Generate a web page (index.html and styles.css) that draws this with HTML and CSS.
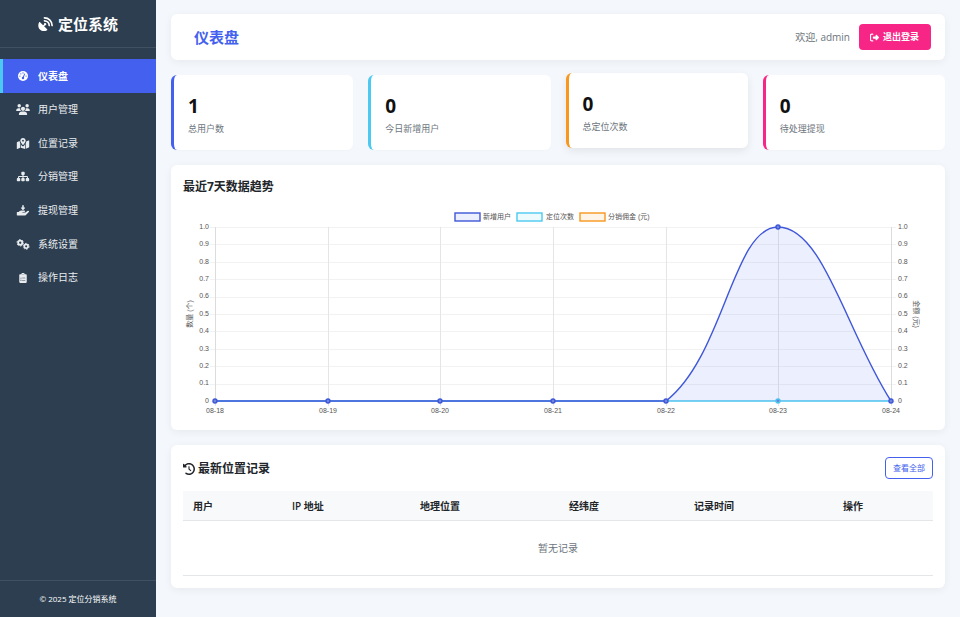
FILE: index.html
```html
<!DOCTYPE html>
<html lang="zh-CN">
<head>
<meta charset="utf-8">
<meta name="viewport" content="width=device-width, initial-scale=1">
<title>仪表盘 - 定位系统</title>
<link rel="stylesheet" href="styles.css">
</head>
<body>
<div class="layout">
  <aside class="sidebar">
    <div class="brand">
      <svg class="brand-icon" viewBox="0 0 512 512" aria-hidden="true"><path fill="currentColor" d="M40 180c8-10 22-10 30-2l104 104 30-30c-5-28 14-46 36-46 26 0 44 20 44 44 0 22-20 40-46 36l-30 30 104 104c10 10 8 24-2 30C228 500 130 490 66 426 4 362-10 262 40 180z"/><path fill="none" stroke="currentColor" stroke-width="56" stroke-linecap="round" d="M220 30c144 0 262 118 262 262M220 130c89 0 162 73 162 162"/></svg>
      <span>定位系统</span>
    </div>
    <nav class="menu" aria-label="主菜单">
      <a class="menu-link active" href="#dashboard">
        <svg class="icon" viewBox="0 0 512 512" aria-hidden="true"><circle cx="256" cy="256" r="256" fill="currentColor"/><g class="cut"><circle cx="256" cy="98" r="34"/><circle cx="144" cy="144" r="32"/><circle cx="98" cy="256" r="32"/><circle cx="414" cy="256" r="32"/><circle cx="256" cy="356" r="62"/><path d="M232 340l92-214 44 20-84 212z"/></g></svg>
        仪表盘</a>
      <a class="menu-link" href="#users">
        <svg class="icon wide" viewBox="0 0 640 512" aria-hidden="true"><g fill="currentColor"><circle cx="144" cy="80" r="80"/><circle cx="512" cy="80" r="80"/><circle cx="320" cy="224" r="96"/><path d="M0 299c0-59 48-107 107-107h43c16 0 31 4 45 10-12 48 4 90 38 118H21c-12 0-21-9-21-21zM407 320c34-28 50-70 38-118 14-6 29-10 45-10h43c59 0 107 48 107 107 0 12-9 21-21 21zM128 485c0-73 60-133 133-133h118c73 0 133 60 133 133 0 15-12 27-27 27H155c-15 0-27-12-27-27z"/></g></svg>
        用户管理</a>
      <a class="menu-link" href="#locations">
        <svg class="icon wide" viewBox="0 0 576 512" aria-hidden="true"><path fill="currentColor" fill-rule="evenodd" d="M288 0c-70 0-126 56-126 126 0 56 82 158 112 194 8 10 20 10 28 0 30-36 112-138 112-194C414 56 358 0 288 0zm0 84a42 42 0 1 1 0 84 42 42 0 0 1 0-84z"/><path fill="currentColor" d="M0 218c0-14 8-26 20-30l110-44c6 40 18 74 30 100v214L22 510c-10 4-22-4-22-14zM192 298c22 34 44 58 56 72 20 24 58 24 78 0 14-16 36-42 58-74v216l-192-54zM416 246c18-36 28-66 32-90l106-42c10-4 22 4 22 16v280c0 14-8 26-20 30l-140 56z"/></svg>
        位置记录</a>
      <a class="menu-link" href="#distribution">
        <svg class="icon wide" viewBox="0 0 576 512" aria-hidden="true"><path fill="currentColor" d="M208 80c0-26 22-48 48-48h64c26 0 48 22 48 48v64c0 26-22 48-48 48h-8v40h152c30 0 56 26 56 56v32h8c26 0 48 22 48 48v64c0 26-22 48-48 48h-64c-26 0-48-22-48-48v-64c0-26 22-48 48-48h8v-32c0-5-3-8-8-8H312v40h8c26 0 48 22 48 48v64c0 26-22 48-48 48h-64c-26 0-48-22-48-48v-64c0-26 22-48 48-48h8v-40H112c-5 0-8 3-8 8v32h8c26 0 48 22 48 48v64c0 26-22 48-48 48H48c-26 0-48-22-48-48v-64c0-26 22-48 48-48h8v-32c0-30 26-56 56-56h152v-40h-8c-26 0-48-22-48-48z"/></svg>
        分销管理</a>
      <a class="menu-link" href="#withdrawals">
        <svg class="icon wide" viewBox="0 0 576 512" aria-hidden="true"><path fill="currentColor" d="M252 24c0-32 72-32 72 0v90h38c22 0 30 22 14 38l-72 76c-10 10-22 10-32 0l-72-76c-16-16-8-38 14-38h38zM0 342c0-13 9-22 22-22h62l48-38c22-18 48-26 76-26h142c46 0 46 64 0 64h-78c-22 0-22 32 0 32h110c14 0 26-4 36-12l92-68c42-28 86 22 48 56L426 464c-20 18-42 26-66 26H22c-13 0-22-9-22-22z"/></svg>
        提现管理</a>
      <a class="menu-link" href="#settings">
        <svg class="icon wide" viewBox="0 0 640 512" aria-hidden="true"><g fill="none" stroke="currentColor"><circle cx="190" cy="176" r="96" stroke-width="84"/><circle cx="190" cy="176" r="150" stroke-width="44" stroke-dasharray="79 78"/><circle cx="468" cy="342" r="88" stroke-width="78"/><circle cx="468" cy="342" r="138" stroke-width="42" stroke-dasharray="72 72.500"/></g></svg>
        系统设置</a>
      <a class="menu-link" href="#logs">
        <svg class="icon" viewBox="0 0 512 512" aria-hidden="true"><path fill="currentColor" fill-rule="evenodd" d="M112 64h64a80 80 0 0 1 160 0h64c27 0 48 21 48 48v352c0 27-21 48-48 48H112c-27 0-48-21-48-48V112c0-27 21-48 48-48zm144-24a24 24 0 1 0 0 48 24 24 0 0 0 0-48zM128 238v42h48v-42zm84 0v32h160v-32zm-84 112v42h48v-42zm84 4v32h160v-32z"/></svg>
        操作日志</a>
    </nav>
    <footer class="sidebar-footer">© 2025 定位分销系统</footer>
  </aside>

  <main class="main">
    <header class="topbar">
      <h1>仪表盘</h1>
      <div class="account">
        <span>欢迎, admin</span>
        <button class="logout" type="button">
          <svg class="logout-icon" viewBox="0 0 512 512" aria-hidden="true"><path fill="currentColor" d="M377.900 105.900L500.700 228.700c7.200 7.200 11.300 17.100 11.300 27.300s-4.100 20.100-11.300 27.300L377.900 406.100c-6.400 6.400-15 9.900-24 9.900-18.700 0-33.900-15.200-33.900-33.900V320H192c-17.700 0-32-14.300-32-32v-64c0-17.700 14.300-32 32-32h128v-62.100c0-18.700 15.200-33.900 33.900-33.900 9 0 17.600 3.600 24 9.900zM160 96H96c-17.700 0-32 14.300-32 32v256c0 17.700 14.300 32 32 32h64c17.700 0 32 14.300 32 32s-14.300 32-32 32H96c-53 0-96-43-96-96V128C0 75 43 32 96 32h64c17.700 0 32 14.300 32 32s-14.300 32-32 32z"/></svg>
          退出登录
        </button>
      </div>
    </header>

    <section class="stats" aria-label="统计">
      <div class="stat blue"><strong>1</strong><span>总用户数</span></div>
      <div class="stat cyan"><strong>0</strong><span>今日新增用户</span></div>
      <div class="stat orange raised"><strong>0</strong><span>总定位次数</span></div>
      <div class="stat pink"><strong>0</strong><span>待处理提现</span></div>
    </section>

    <section class="card">
      <h2 class="chart-title">最近7天数据趋势</h2>
      <svg class="chart" viewBox="0 0 750 212" role="img" aria-label="最近7天数据趋势">
        <g class="legend-box">
          <rect class="s-blue" x="272" y="7" width="25" height="8"/>
          <rect class="s-cyan" x="334" y="7" width="25" height="8"/>
          <rect class="s-orange" x="397" y="7" width="25" height="8"/>
        </g>
        <g>
          <text x="300" y="13">新增用户</text>
          <text x="363" y="13">定位次数</text>
          <text x="425" y="13">分销佣金 (元)</text>
        </g>
        <path class="grid-h" d="M27 21H713M27 38H713M27 56H713M27 73H713M27 91H713M27 108H713M27 125H713M27 143H713M27 160H713M27 178H713M27 195H713"/>
        <path class="grid-v" d="M32 21V200M145 21V200M257 21V200M370 21V200M483 21V200M595 21V200M708 21V200"/>
        <path class="axis" d="M32 21V195M708 21V195"/>
        <g text-anchor="end">
          <text x="26" y="23">1.0</text><text x="26" y="40">0.9</text><text x="26" y="58">0.8</text><text x="26" y="75">0.7</text><text x="26" y="92">0.6</text><text x="26" y="110">0.5</text><text x="26" y="127">0.4</text><text x="26" y="145">0.3</text><text x="26" y="162">0.2</text><text x="26" y="179">0.1</text><text x="26" y="197">0</text>
        </g>
        <g>
          <text x="715" y="23">1.0</text><text x="715" y="40">0.9</text><text x="715" y="58">0.8</text><text x="715" y="75">0.7</text><text x="715" y="92">0.6</text><text x="715" y="110">0.5</text><text x="715" y="127">0.4</text><text x="715" y="145">0.3</text><text x="715" y="162">0.2</text><text x="715" y="179">0.1</text><text x="715" y="197">0</text>
        </g>
        <g text-anchor="middle">
          <text x="32" y="207">08-18</text><text x="145" y="207">08-19</text><text x="257" y="207">08-20</text><text x="370" y="207">08-21</text><text x="483" y="207">08-22</text><text x="595" y="207">08-23</text><text x="708" y="207">08-24</text>
          <text transform="translate(9 108) rotate(-90)">数量 (个)</text>
          <text transform="translate(731 108) rotate(90)">金额 (元)</text>
        </g>
        <path class="line s-cyan" d="M32 195H708"/>
        <circle class="point s-cyan" cx="595" cy="195" r="2"/>
        <path class="area" d="M483 195C541 150 550 21 595 21C640 21 663 125 708 195Z"/>
        <path class="line s-blue" d="M32 195H483C541 150 550 21 595 21C640 21 663 125 708 195"/>
        <g class="point s-blue">
          <circle cx="32" cy="195" r="2"/><circle cx="145" cy="195" r="2"/><circle cx="257" cy="195" r="2"/><circle cx="370" cy="195" r="2"/><circle cx="483" cy="195" r="2"/><circle cx="595" cy="21" r="2"/><circle cx="708" cy="195" r="2"/>
        </g>
      </svg>
    </section>

    <section class="card">
      <div class="card-head">
        <h2><svg class="history-icon" viewBox="0 0 512 512" aria-hidden="true"><path fill="currentColor" d="M75 75L41 41C25.900 25.900 0 36.600 0 57.900V168c0 13.300 10.700 24 24 24h110.100c21.400 0 32.100-25.900 17-41l-30.800-30.800C155 85.500 203 64 256 64c106 0 192 86 192 192s-86 192-192 192c-40.800 0-78.600-12.700-109.700-34.400-14.500-10.100-34.400-6.600-44.600 7.900s-6.600 34.400 7.900 44.600C151.200 495 201.700 512 256 512c141.400 0 256-114.600 256-256S397.400 0 256 0C185.300 0 121.300 28.700 75 75zm181 53c-13.300 0-24 10.700-24 24v104c0 6.400 2.500 12.500 7 17l72 72c9.400 9.400 24.600 9.400 33.900 0s9.400-24.600 0-33.900l-65-65V152c0-13.300-10.700-24-24-24z"/></svg>最新位置记录</h2>
        <a class="view-all" href="#locations">查看全部</a>
      </div>
      <table class="records">
        <colgroup><col class="c-user"><col class="c-ip"><col class="c-place"><col class="c-coord"><col class="c-time"><col class="c-action"></colgroup>
        <thead>
          <tr><th scope="col">用户</th><th scope="col">IP 地址</th><th scope="col">地理位置</th><th scope="col">经纬度</th><th scope="col">记录时间</th><th scope="col">操作</th></tr>
        </thead>
        <tbody>
          <tr><td class="empty" colspan="6">暂无记录</td></tr>
        </tbody>
      </table>
    </section>
  </main>
</div>
</body>
</html>
```
FILE: styles.css
```css
:root {
  --blue: #4361ee;
  --cyan: #4cc9f0;
  --orange: #f8961e;
  --pink: #f72585;
  --ink: #212529;
  --muted: #6c757d;
}

* { box-sizing: border-box; }

body {
  margin: 0;
  background: #f4f7fb;
  color: var(--ink);
  font-family: "Open Sans", "Noto Sans CJK SC", sans-serif;
  font-size: 10px;
  line-height: 15px;
}

h1, h2 { margin: 0; }
a { text-decoration: none; }

.layout { display: flex; min-height: 100vh; }

.sidebar {
  display: flex;
  flex-direction: column;
  flex: 0 0 156px;
  background: #2c3e50;
  color: #fff;
}

.brand {
  display: flex;
  align-items: center;
  justify-content: center;
  gap: 5px;
  padding: 13px 12px 11px;
  border-bottom: 1px solid #415161;
  font-size: 15px;
  font-weight: 700;
  line-height: 23px;
}

.brand-icon { width: 15px; height: 15px; }

.menu {
  display: grid;
  grid-template-rows: repeat(7, 1fr);
  height: 235px;
  margin-top: 11px;
}

.menu-link {
  display: flex;
  align-items: center;
  gap: 8px;
  padding: 1px 0 0 13px;
  border-left: 3px solid transparent;
  color: #e9ecef;
}

.menu-link.active {
  background: var(--blue);
  border-left-color: var(--cyan);
  color: #fff;
  font-weight: 700;
}

.icon { width: 14px; height: 10px; }
.icon.wide { height: 11px; }
.cut { fill: var(--blue); }

.sidebar-footer {
  margin-top: auto;
  padding: 10px 11px 11px;
  border-top: 1px solid #415161;
  font-size: 8px;
  text-align: center;
}

.main {
  display: flex;
  flex: 1;
  flex-direction: column;
  gap: 15px;
  min-width: 0;
  padding: 14px 15px;
}

.topbar, .card, .stat {
  background: #fff;
  border-radius: 6px;
}

.topbar, .card { box-shadow: 0 2px 8px rgba(0, 0, 0, 0.06); }

.topbar {
  display: flex;
  align-items: center;
  justify-content: space-between;
  padding: 10px 14px 10px 23px;
}

.topbar h1 {
  color: var(--blue);
  font-size: 15px;
  line-height: 23px;
}

.account {
  display: flex;
  align-items: center;
  gap: 9px;
  color: var(--muted);
}

.logout {
  display: flex;
  align-items: center;
  gap: 4px;
  padding: 6px 12px 6px 11px;
  border: 0;
  border-radius: 4px;
  background: var(--pink);
  color: #fff;
  font: 700 9px/14px "Open Sans", "Noto Sans CJK SC", sans-serif;
}

.logout-icon { width: 9px; height: 9px; }

.stats {
  display: grid;
  grid-template-columns: repeat(4, 1fr);
  gap: 15px;
}

.stat {
  display: flex;
  flex-direction: column;
  padding: 17px 14px 13px;
  border-left: 3px solid;
  box-shadow: 0 1px 3px rgba(0, 0, 0, 0.02);
}

.stat strong { margin-bottom: 1px; color: #111; font-size: 19px; line-height: 28px; }
.stat span { color: var(--muted); font-size: 9px; line-height: 16px; }
.stat.blue { border-color: var(--blue); }
.stat.cyan { border-color: var(--cyan); }
.stat.orange { border-color: var(--orange); }
.stat.pink { border-color: var(--pink); }
.stat.raised { transform: translateY(-2px); box-shadow: 0 3px 8px rgba(0, 0, 0, 0.08); }

.card { padding: 12px; }
.card h2 { font-size: 12px; font-weight: 700; line-height: 20px; }
.card .chart-title { margin-bottom: 9px; }

.chart { display: block; width: 100%; height: auto; }
.chart text { fill: #555; font: 7px "Liberation Sans", "Noto Sans CJK SC", sans-serif; }
.legend-box { stroke-width: 1.4; }
.s-blue { stroke: #3f57d8; fill: #eceffd; }
.s-cyan { stroke: var(--cyan); fill: #edfafe; }
.s-orange { stroke: var(--orange); fill: #fef4e8; }
.grid-h { stroke: #f2f2f2; shape-rendering: crispEdges; }
.grid-v { stroke: #e5e5e5; shape-rendering: crispEdges; }
.axis { stroke: #dcdcdc; shape-rendering: crispEdges; }
.line { fill: none; stroke-width: 1.4; }
.area { fill: var(--blue); fill-opacity: 0.1; }
.point { fill: #7186d8; stroke-width: 1.4; }

.card-head {
  display: flex;
  align-items: center;
  justify-content: space-between;
  margin-bottom: 12px;
}

.card-head h2 { display: flex; align-items: center; gap: 3px; padding-top: 2px; }
.history-icon { width: 12px; height: 12px; }

.view-all {
  padding: 3px 7px;
  border: 1px solid var(--blue);
  border-radius: 4px;
  color: var(--blue);
  font-size: 8px;
  line-height: 14px;
}

.records {
  width: 100%;
  border-collapse: separate;
  border-spacing: 0;
  table-layout: fixed;
}

.records th {
  padding: 8px 10px 6px;
  border-bottom: 1px solid #e4e7ea;
  background: #f8f9fa;
  font-weight: 600;
  text-align: left;
}

.records .empty {
  padding: 20px 10px 19px;
  border-bottom: 1px solid #e4e7ea;
  color: var(--muted);
  text-align: center;
}

/* The last column takes the remaining width. */
.c-user { width: 99px; }
.c-ip { width: 128px; }
.c-coord { width: 125px; }
.c-place, .c-time { width: 149px; }
```
